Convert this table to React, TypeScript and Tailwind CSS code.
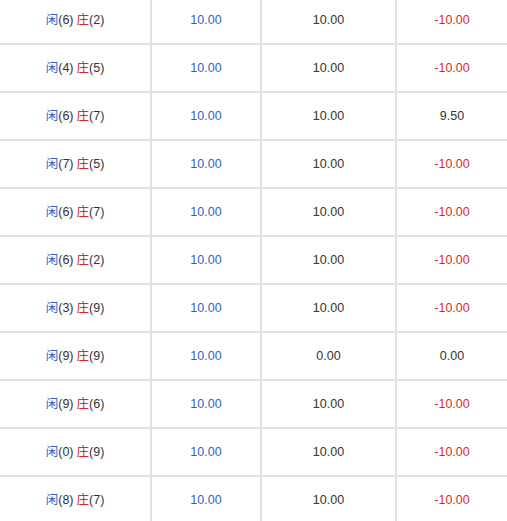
import React from "react";

type Row = { p: string; b: string; bet: string; valid: string; win: string };

const rows: Row[] = [
  { p: "6", b: "2", bet: "10.00", valid: "10.00", win: "-10.00" },
  { p: "4", b: "5", bet: "10.00", valid: "10.00", win: "-10.00" },
  { p: "6", b: "7", bet: "10.00", valid: "10.00", win: "9.50" },
  { p: "7", b: "5", bet: "10.00", valid: "10.00", win: "-10.00" },
  { p: "6", b: "7", bet: "10.00", valid: "10.00", win: "-10.00" },
  { p: "6", b: "2", bet: "10.00", valid: "10.00", win: "-10.00" },
  { p: "3", b: "9", bet: "10.00", valid: "10.00", win: "-10.00" },
  { p: "9", b: "9", bet: "10.00", valid: "0.00", win: "0.00" },
  { p: "9", b: "6", bet: "10.00", valid: "10.00", win: "-10.00" },
  { p: "0", b: "9", bet: "10.00", valid: "10.00", win: "-10.00" },
  { p: "8", b: "7", bet: "10.00", valid: "10.00", win: "-10.00" },
];

export default function App() {
  return (
    <div
      className="w-[507px] h-[521px] overflow-hidden bg-white text-[12.5px] text-[#333]"
      style={{ fontFamily: '"Liberation Sans", Arial, "Noto Sans CJK SC", sans-serif' }}
    >
      <div className="-mt-[3px] flex flex-col">
        {rows.map((r, i) => (
          <div key={i} className="flex h-[48px] border-b-2 border-[#e1e1e1]">
            <div className="w-[152px] shrink-0 flex items-center justify-center border-r-2 border-[#e1e1e1]">
              <span className="text-[#2f62c8]">闲</span>
              <span>({r.p})</span>
              <span className="ml-[3px] text-[#e0262b]">庄</span>
              <span>({r.b})</span>
            </div>
            <div className="w-[110px] shrink-0 flex items-center justify-center border-r-2 border-[#e1e1e1] text-[#2f62c8]">
              {r.bet}
            </div>
            <div className="w-[135px] shrink-0 flex items-center justify-center border-r-2 border-[#e1e1e1]">
              {r.valid}
            </div>
            <div
              className={
                r.win.startsWith("-")
                  ? "w-[110px] shrink-0 flex items-center justify-center text-[#e0262b]"
                  : "w-[110px] shrink-0 flex items-center justify-center"
              }
            >
              {r.win}
            </div>
          </div>
        ))}
      </div>
    </div>
  );
}
